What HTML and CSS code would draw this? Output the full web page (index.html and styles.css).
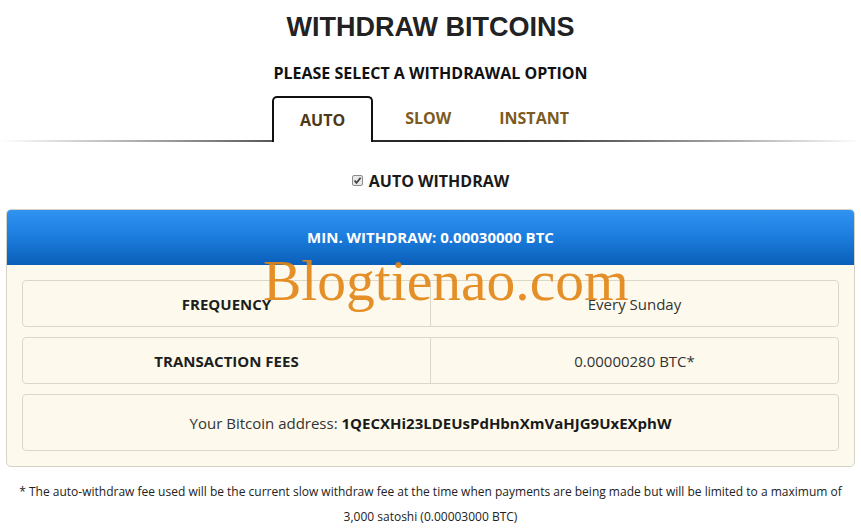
FILE: index.html
```html
<!DOCTYPE html>
<html>
<head>
<meta charset="utf-8">
<link rel="stylesheet" href="styles.css">
</head>
<body>
<div class="page">
  <h1 class="title">WITHDRAW BITCOINS</h1>
  <h2 class="subtitle">PLEASE SELECT A WITHDRAWAL OPTION</h2>
  <div class="tabs">
    <div class="tab active">AUTO</div>
    <div class="tab">SLOW</div>
    <div class="tab">INSTANT</div>
  </div>
  <div class="auto-row">
    <span class="check"><svg width="11" height="11" viewBox="0 0 11 11"><rect x="0.5" y="0.5" width="10" height="10" rx="1.5" fill="#e8e8e8" stroke="#8c8c8c"/><path d="M2.5 5.5 L4.5 7.8 L8.6 2.8" fill="none" stroke="#444" stroke-width="1.8"/></svg></span>
    <span class="auto-label">AUTO WITHDRAW</span>
  </div>
  <div class="panel">
    <div class="panel-head">MIN. WITHDRAW: 0.00030000 BTC</div>
    <div class="panel-body">
      <div class="row">
        <div class="cell key">FREQUENCY</div>
        <div class="cell val">Every Sunday</div>
      </div>
      <div class="row">
        <div class="cell key">TRANSACTION FEES</div>
        <div class="cell val">0.00000280 BTC*</div>
      </div>
      <div class="row addr">Your Bitcoin address:&nbsp;<b>1QECXHi23LDEUsPdHbnXmVaHJG9UxEXphW</b></div>
    </div>
  </div>
  <p class="note">* The auto-withdraw fee used will be the current slow withdraw fee at the time when payments are being made but will be limited to a maximum of 3,000 satoshi (0.00003000 BTC)</p>
  <div class="watermark">Blogtienao.com</div>
</div>
</body>
</html>
```
FILE: styles.css
```css
* { box-sizing: border-box; }
html, body { margin: 0; padding: 0; background: #fff; }
body { font-family: "Open Sans", "DejaVu Sans", sans-serif; color: #222; }
.page { position: relative; width: 861px; height: 530px; overflow: hidden; }

.title {
  margin: 0;
  padding-top: 10px;
  font-family: "Liberation Sans", Arial, sans-serif;
  font-weight: bold;
  font-size: 27px;
  line-height: 34px;
  text-align: center;
  color: #222;
}
.subtitle {
  margin: 18px 0 0;
  font-size: 16px;
  line-height: 22px;
  font-weight: 700;
  text-align: center;
  color: #111;
}
.tabs {
  margin-top: 12px;
  display: flex;
  justify-content: center;
  height: 46px;
  background: linear-gradient(to right, rgba(60,60,60,0) 0%, #999 20%, #333 38%, #222 50%, #444 65%, #aaa 85%, rgba(60,60,60,0) 100%) no-repeat left bottom / 100% 2px;
}
.tab {
  padding: 11px 20px 0;
  margin-left: 8px;
  font-size: 16px;
  font-weight: 700;
  line-height: 22px;
  color: #7d5a1e;
}
.tab.active {
  margin-left: 0;
  margin-right: 4px;
  padding: 11px 26px 0;
  border: 2px solid #111;
  border-bottom: none;
  border-radius: 5px 5px 0 0;
  background: #fff;
  color: #4d3916;
}
.auto-row {
  margin-top: 27px;
  display: flex;
  justify-content: center;
  align-items: center;
  gap: 6px;
  height: 24px;
}
.check { display: flex; margin-top: -2px; }
.auto-label { font-size: 16px; font-weight: 700; color: #1a1a1a; }

.panel {
  margin: 16px 6px 0;
  border-radius: 5px;
  border: 1px solid #d6d3c6;
  overflow: hidden;
  background: #fdfaed;
}
.panel-head {
  height: 56px;
  display: flex;
  align-items: center;
  justify-content: center;
  background: linear-gradient(to bottom, #3193f2 0%, #1e7fe0 45%, #0a5fb8 100%);
  color: #fff;
  font-size: 15px;
  font-weight: 700;
  margin: -1px -1px 0;
}
.panel-body {
  padding: 15px 15px 15px;
  display: flex;
  flex-direction: column;
  gap: 10px;
}
.row {
  display: flex;
  height: 47px;
  border: 1px solid #dcd8c8;
  border-radius: 4px;
  font-size: 15px;
}
.cell {
  flex: 1;
  display: flex;
  align-items: center;
  justify-content: center;
}
.cell.key { font-weight: 700; color: #1e1e1e; border-right: 1px solid #dcd8c8; }
.cell.val { color: #333; }
.row.addr {
  height: 57px;
  align-items: center;
  justify-content: center;
  color: #333;
}
.row.addr b { color: #1a1a1a; }

.note {
  margin: 12px 16px 0;
  font-size: 12px;
  line-height: 25px;
  text-align: center;
  color: #222;
}
.watermark {
  position: absolute;
  left: 263px;
  top: 252px;
  font-family: "Liberation Serif", "Times New Roman", serif;
  font-size: 57.5px;
  line-height: 57px;
  color: rgba(226, 134, 22, 0.92);
  white-space: nowrap;
}
```
